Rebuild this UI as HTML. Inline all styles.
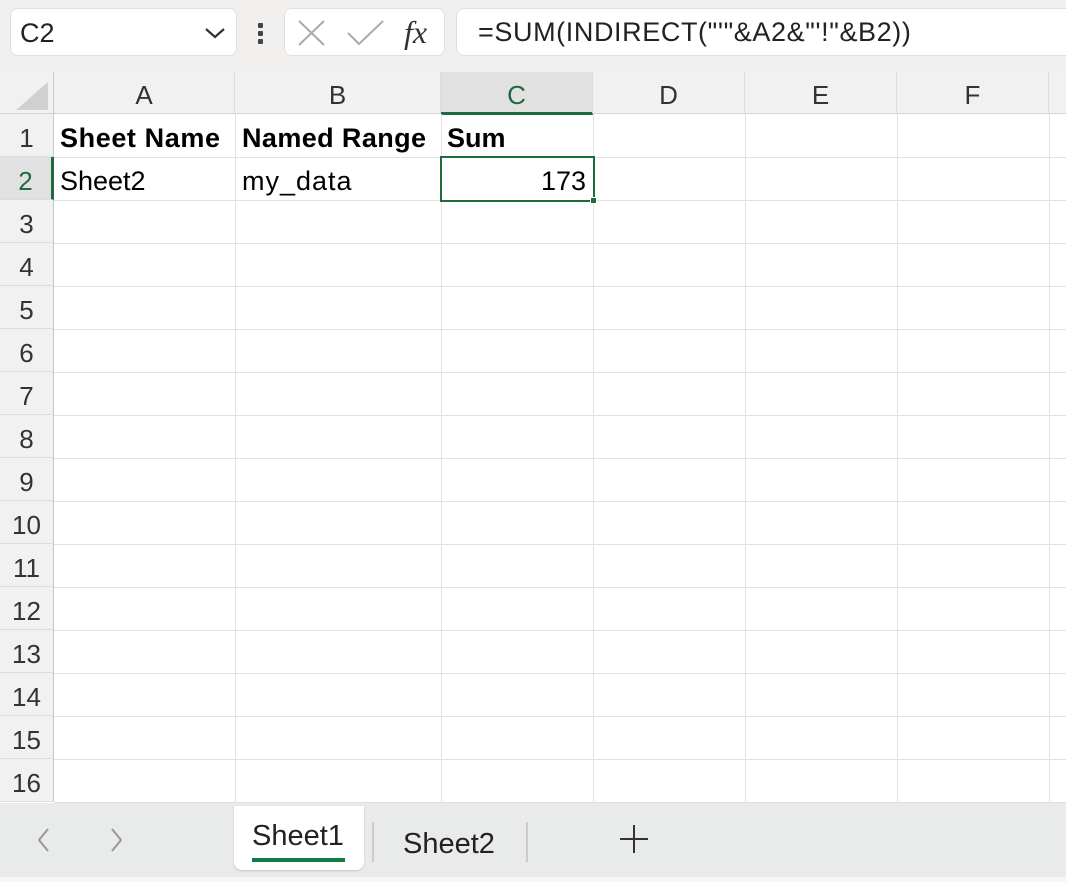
<!DOCTYPE html>
<html><head><style>
*{margin:0;padding:0;box-sizing:border-box}
body{width:1066px;height:882px;overflow:hidden;background:#fff;font-family:"Liberation Sans",sans-serif;position:relative;color:#000}
.abs{position:absolute}
.top{left:0;top:0;width:1066px;height:72px;background:#f1f0ef}
.box{background:#fff;border:1px solid #e1dfdd;border-radius:8px}
.colh{top:72px;height:42px;background:#f1f1f1;border-bottom:1px solid #d4d4d4}
.ch{position:absolute;top:72px;height:42px;border-right:1px solid #dcdcdc;font-size:26px;color:#333;text-align:center;line-height:46px}
.rh{position:absolute;left:0;width:54px;height:43px;background:#f1f1f1;border-bottom:1px solid #dcdcdc;border-right:1px solid #c8c8c8;font-size:26px;color:#333;text-align:center;line-height:48px}
.hl{position:absolute;left:54px;width:1012px;height:1px;background:#e1e1e1}
.vl{position:absolute;top:114px;height:689px;width:1px;background:#e1e1e1}
.cell{position:absolute;font-size:27px;line-height:48px}
</style></head><body>
<div class="abs top"></div>
<div class="abs box" style="left:10px;top:8px;width:227px;height:48px"></div>
<div class="abs" style="left:20px;top:18px;font-size:27px;color:#222">C2</div>
<svg class="abs" style="left:204px;top:26px" width="22" height="14"><path d="M2 3 L11 11 L20 3" stroke="#333" stroke-width="2.2" fill="none"/></svg>
<div class="abs" style="left:258px;top:23px;width:5px;height:5px;background:#444;border-radius:1px"></div>
<div class="abs" style="left:258px;top:31px;width:5px;height:5px;background:#444;border-radius:1px"></div>
<div class="abs" style="left:258px;top:39px;width:5px;height:5px;background:#444;border-radius:1px"></div>
<div class="abs box" style="left:284px;top:8px;width:161px;height:48px"></div>
<svg class="abs" style="left:296px;top:18px" width="32" height="30"><path d="M3 3 L28 27 M28 3 L3 27" stroke="#aaa" stroke-width="2" fill="none"/></svg>
<svg class="abs" style="left:346px;top:18px" width="40" height="30"><path d="M2 15 L13 26 L37 3" stroke="#aaa" stroke-width="2" fill="none"/></svg>
<div class="abs" style="left:404px;top:14px;font-family:'Liberation Serif',serif;font-style:italic;font-size:32px;color:#333">fx</div>
<div class="abs box" style="left:456px;top:8px;width:620px;height:48px;border-radius:8px 0 0 8px"></div>
<div class="abs" style="left:478px;top:17px;font-size:27px;color:#222;letter-spacing:0.6px">=SUM(INDIRECT("'"&amp;A2&amp;"'!"&amp;B2))</div>

<div class="abs colh" style="left:0;width:1066px"></div>
<svg class="abs" style="left:14px;top:80px" width="36" height="32"><path d="M34 2 L34 30 L2 30 Z" fill="#d0d0d0"/></svg>
<div class="ch" style="left:0;width:54px;border-right:1px solid #c8c8c8"></div>
<div class="ch" style="left:54px;width:181px">A</div>
<div class="ch" style="left:235px;width:206px">B</div>
<div class="ch" style="left:441px;width:152px;background:#e1e1e1;color:#1e6b3f;border-bottom:3px solid #1e6b3f;height:43px">C</div>
<div class="ch" style="left:593px;width:152px">D</div>
<div class="ch" style="left:745px;width:152px">E</div>
<div class="ch" style="left:897px;width:152px">F</div>
<div class="ch" style="left:1049px;width:20px"></div>

<div class="vl" style="left:235px"></div>
<div class="vl" style="left:441px"></div>
<div class="vl" style="left:593px"></div>
<div class="vl" style="left:745px"></div>
<div class="vl" style="left:897px"></div>
<div class="vl" style="left:1049px"></div>

<div class="rh" style="top:114px">1</div><div class="hl" style="top:157px"></div>
<div class="rh" style="top:157px;background:#e1e1e1;color:#1e6b3f;border-right:3px solid #1e6b3f">2</div><div class="hl" style="top:200px"></div>
<div class="rh" style="top:200px">3</div><div class="hl" style="top:243px"></div>
<div class="rh" style="top:243px">4</div><div class="hl" style="top:286px"></div>
<div class="rh" style="top:286px">5</div><div class="hl" style="top:329px"></div>
<div class="rh" style="top:329px">6</div><div class="hl" style="top:372px"></div>
<div class="rh" style="top:372px">7</div><div class="hl" style="top:415px"></div>
<div class="rh" style="top:415px">8</div><div class="hl" style="top:458px"></div>
<div class="rh" style="top:458px">9</div><div class="hl" style="top:501px"></div>
<div class="rh" style="top:501px">10</div><div class="hl" style="top:544px"></div>
<div class="rh" style="top:544px">11</div><div class="hl" style="top:587px"></div>
<div class="rh" style="top:587px">12</div><div class="hl" style="top:630px"></div>
<div class="rh" style="top:630px">13</div><div class="hl" style="top:673px"></div>
<div class="rh" style="top:673px">14</div><div class="hl" style="top:716px"></div>
<div class="rh" style="top:716px">15</div><div class="hl" style="top:759px"></div>
<div class="rh" style="top:759px">16</div><div class="hl" style="top:802px"></div>

<div class="cell" style="left:60px;top:114px;font-weight:bold;font-size:27px;letter-spacing:0.6px">Sheet Name</div>
<div class="cell" style="left:242px;top:114px;font-weight:bold;font-size:27px;letter-spacing:0.4px">Named Range</div>
<div class="cell" style="left:447px;top:114px;font-weight:bold;font-size:27px">Sum</div>
<div class="cell" style="left:60px;top:157px">Sheet2</div>
<div class="cell" style="left:242px;top:157px;letter-spacing:1px">my_data</div>
<div class="abs" style="left:440px;top:156px;width:155px;height:46px;border:2px solid #1e6b3f"></div>
<div class="cell" style="left:440px;top:157px;width:146px;text-align:right">173</div>
<div class="abs" style="left:590px;top:197px;width:7px;height:7px;background:#1e6b3f;border:1px solid #fff"></div>

<div class="abs" style="left:0;top:803px;width:1066px;height:79px;background:#e9eaea"></div>
<div class="abs" style="left:0;top:877px;width:1066px;height:5px;background:#f6f6f6"></div>
<svg class="abs" style="left:34px;top:826px" width="20" height="28"><path d="M14 3 L5 14 L14 25" stroke="#999" stroke-width="2" fill="none"/></svg>
<svg class="abs" style="left:106px;top:826px" width="20" height="28"><path d="M6 3 L15 14 L6 25" stroke="#999" stroke-width="2" fill="none"/></svg>
<div class="abs" style="left:234px;top:806px;width:130px;height:64px;background:#fff;border-radius:0 0 8px 8px;box-shadow:0 1px 2px rgba(0,0,0,.15)"></div>
<div class="abs" style="left:252px;top:820px;font-size:29px;color:#222">Sheet1</div>
<div class="abs" style="left:252px;top:858px;width:93px;height:4px;background:#107c41"></div>
<div class="abs" style="left:372px;top:822px;width:2px;height:40px;background:#ccc"></div>
<div class="abs" style="left:403px;top:828px;font-size:29px;color:#222">Sheet2</div>
<div class="abs" style="left:526px;top:822px;width:2px;height:40px;background:#ccc"></div>
<div class="abs" style="left:620px;top:838px;width:28px;height:2px;background:#333"></div>
<div class="abs" style="left:633px;top:825px;width:2px;height:28px;background:#333"></div>
</body></html>
